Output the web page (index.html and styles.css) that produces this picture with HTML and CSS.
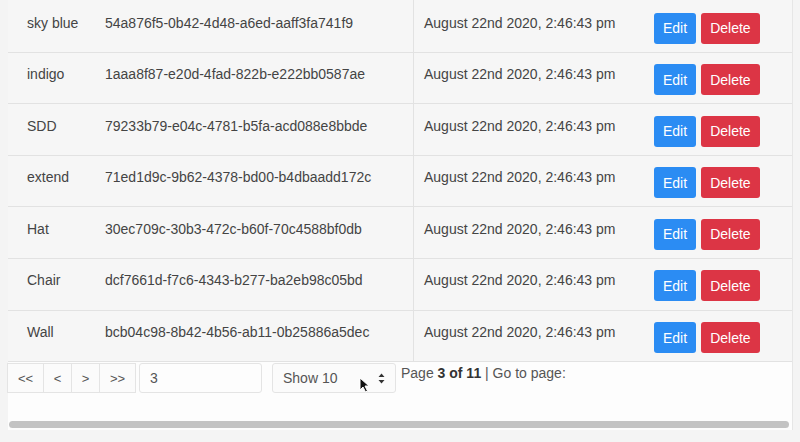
FILE: index.html
```html
<!DOCTYPE html>
<html lang="en">
<head>
    <meta charset="UTF-8">
    <title>Items</title>
    <link rel="stylesheet" href="styles.css">
</head>
<body>
    <div class="container">
        <table class="items">
            <tbody>
                <tr>
                    <td class="col-name">sky blue</td>
                    <td class="col-id">54a876f5-0b42-4d48-a6ed-aaff3fa741f9</td>
                    <td class="col-date">August 22nd 2020, 2:46:43 pm</td>
                    <td class="col-actions"><button class="btn btn-edit">Edit</button><button class="btn btn-delete">Delete</button></td>
                </tr>
                <tr>
                    <td class="col-name">indigo</td>
                    <td class="col-id">1aaa8f87-e20d-4fad-822b-e222bb0587ae</td>
                    <td class="col-date">August 22nd 2020, 2:46:43 pm</td>
                    <td class="col-actions"><button class="btn btn-edit">Edit</button><button class="btn btn-delete">Delete</button></td>
                </tr>
                <tr>
                    <td class="col-name">SDD</td>
                    <td class="col-id">79233b79-e04c-4781-b5fa-acd088e8bbde</td>
                    <td class="col-date">August 22nd 2020, 2:46:43 pm</td>
                    <td class="col-actions"><button class="btn btn-edit">Edit</button><button class="btn btn-delete">Delete</button></td>
                </tr>
                <tr>
                    <td class="col-name">extend</td>
                    <td class="col-id">71ed1d9c-9b62-4378-bd00-b4dbaadd172c</td>
                    <td class="col-date">August 22nd 2020, 2:46:43 pm</td>
                    <td class="col-actions"><button class="btn btn-edit">Edit</button><button class="btn btn-delete">Delete</button></td>
                </tr>
                <tr>
                    <td class="col-name">Hat</td>
                    <td class="col-id">30ec709c-30b3-472c-b60f-70c4588bf0db</td>
                    <td class="col-date">August 22nd 2020, 2:46:43 pm</td>
                    <td class="col-actions"><button class="btn btn-edit">Edit</button><button class="btn btn-delete">Delete</button></td>
                </tr>
                <tr>
                    <td class="col-name">Chair</td>
                    <td class="col-id">dcf7661d-f7c6-4343-b277-ba2eb98c05bd</td>
                    <td class="col-date">August 22nd 2020, 2:46:43 pm</td>
                    <td class="col-actions"><button class="btn btn-edit">Edit</button><button class="btn btn-delete">Delete</button></td>
                </tr>
                <tr>
                    <td class="col-name">Wall</td>
                    <td class="col-id">bcb04c98-8b42-4b56-ab11-0b25886a5dec</td>
                    <td class="col-date">August 22nd 2020, 2:46:43 pm</td>
                    <td class="col-actions"><button class="btn btn-edit">Edit</button><button class="btn btn-delete">Delete</button></td>
                </tr>
            </tbody>
        </table>

        <div class="pagination">
            <div class="pager">
                <button class="page-btn wide">&lt;&lt;</button>
                <button class="page-btn">&lt;</button>
                <button class="page-btn">&gt;</button>
                <button class="page-btn wide">&gt;&gt;</button>
            </div>
            <input type="text" class="page-input" value="3">
            <div class="page-size">
                <span>Show 10</span>
                <svg class="cursor" width="11" height="16" viewBox="0 0 11 16">
                    <path d="M1 1 L1 13 L4 10 L6.5 15 L8.5 14 L6 9 L10 9 Z" fill="#111" stroke="#fff" stroke-width="1"/>
                </svg>
                <svg class="arrows" width="7" height="11" viewBox="0 0 7 11">
                    <path d="M3.5 0.5 L6.5 4 L0.5 4 Z M3.5 10.5 L6.5 7 L0.5 7 Z" fill="#333"/>
                </svg>
            </div>
            <div class="page-info">Page <strong>3 of 11</strong> | Go to page:</div>
        </div>

        <div class="scrollbar"><div class="thumb"></div></div>
    </div>
</body>
</html>
```

FILE: styles.css
```css
body {
    margin: 0;
    background-color: #f4f4f4;
    font-family: "Liberation Sans", Arial, sans-serif;
    font-size: 14px;
    color: #444;
}

.container {
    margin: 0 7px 0 8px;
    height: 430px;
    background: #fdfdfd;
    border-right: 1px solid #e6e6e6;
    box-sizing: border-box;
}

.items {
    width: 100%;
    border-collapse: collapse;
    background: #f6f6f6;
    border-top: 1px solid #f6f6f6;
}

.items td {
    vertical-align: top;
    padding: 11.5px 10px 8.1px;
    border-bottom: 1px solid #e2e2e2;
    line-height: 21px;
    white-space: nowrap;
}

.col-name {
    width: 58px;
    padding-left: 19px !important;
}

.col-id {
    width: 298px;
}

.col-date {
    width: 210px;
    border-left: 1px solid #e2e2e2;
}

.col-actions {
    padding-left: 10px;
}

.btn {
    height: 31px;
    padding: 0 9px;
    border: none;
    border-radius: 3px;
    font-family: inherit;
    font-size: 14px;
    color: #fff;
    cursor: pointer;
}

.btn-edit {
    background-color: #2b8cf3;
}

.btn-delete {
    background-color: #dc3545;
    margin-left: 5px;
}

.pagination {
    display: flex;
    align-items: flex-start;
    padding-top: 1px;
    height: 58px;
}

.pager {
    display: flex;
    margin-left: -1px;
}

.page-btn {
    height: 30px;
    width: 29px;
    padding: 0;
    border: 1px solid #e4e4e4;
    margin-right: -1px;
    background: #fbfbfb;
    font-family: inherit;
    font-size: 13px;
    color: #555;
}

.page-btn.wide {
    width: 37px;
}

.page-input {
    width: 123px;
    height: 30px;
    margin-left: 4px;
    padding: 0 10px;
    box-sizing: border-box;
    border: 1px solid #e4e4e4;
    border-radius: 3px;
    background: #fdfdfd;
    font-family: inherit;
    font-size: 14px;
    color: #555;
}

.page-size {
    position: relative;
    display: flex;
    align-items: center;
    width: 124px;
    height: 30px;
    margin-left: 10px;
    padding: 0 10px;
    box-sizing: border-box;
    border: 1px solid #e4e4e4;
    border-radius: 3px;
    background: #fbfbfb;
    color: #555;
}

.page-size .arrows {
    margin-left: auto;
}

.page-size .cursor {
    position: absolute;
    left: 86px;
    top: 13px;
}

.page-info {
    margin-left: 5px;
    line-height: 20px;
    padding-top: 0;
    color: #555;
}

.page-info strong {
    color: #333;
}

.scrollbar {
    padding: 0 3px 0 1px;
}

.thumb {
    height: 7px;
    border-radius: 4px;
    background: #c3c3c3;
}
```
